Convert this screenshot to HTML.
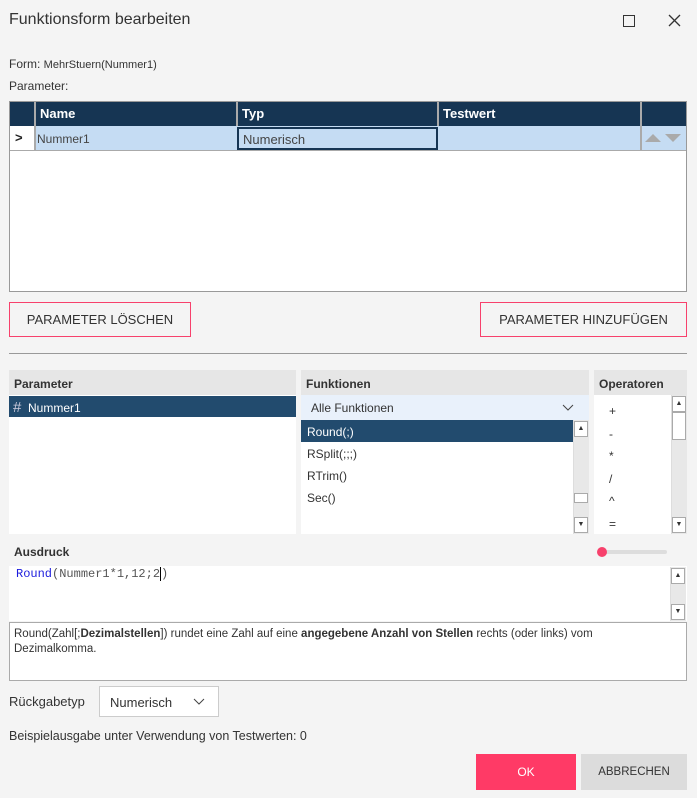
<!DOCTYPE html>
<html><head><meta charset="utf-8"><style>
*{box-sizing:border-box;margin:0;padding:0}
body{width:697px;height:798px;background:#f4f4f4;font-family:"Liberation Sans",sans-serif;color:#333;font-size:12px;position:relative;overflow:hidden}
.a{position:absolute}
.hd{background:#163553;color:#fff;font-weight:bold;font-size:13px}
.ph{background:#e6e6e6;font-weight:bold;font-size:12px;color:#333;padding:7px 5px}
.sb{background:#e8e8e8;border-left:1px solid #ddd}
.arr{position:absolute;width:14px;height:16px;background:#fff;border:1px solid #aaa;font-size:7px;text-align:center;line-height:14px;color:#333}
</style></head><body>
<div class="a" style="left:9px;top:11px;font-size:16px;color:#333">Funktionsform bearbeiten</div>
<div class="a" style="left:623px;top:15px;width:12px;height:12px;border:1.3px solid #333"></div>
<svg class="a" style="left:668px;top:14px" width="13" height="13"><path d="M1 1L12 12M12 1L1 12" stroke="#333" stroke-width="1.3"/></svg>
<div class="a" style="left:9px;top:57px;font-size:12px">Form: <span style="font-size:11px">MehrStuern(Nummer1)</span></div>
<div class="a" style="left:9px;top:79px;font-size:12px">Parameter:</div>

<div class="a" style="left:9px;top:101px;width:678px;height:191px;background:#fff;border:1px solid #999"></div>
<div class="a hd" style="left:10px;top:102px;width:676px;height:24px"></div>
<div class="a hd" style="left:40px;top:106px">Name</div>
<div class="a hd" style="left:242px;top:106px">Typ</div>
<div class="a hd" style="left:443px;top:106px">Testwert</div>
<div class="a" style="left:34px;top:102px;width:2px;height:49px;background:#aaa"></div>
<div class="a" style="left:236px;top:102px;width:2px;height:49px;background:#aaa"></div>
<div class="a" style="left:437px;top:102px;width:2px;height:49px;background:#aaa"></div>
<div class="a" style="left:640px;top:102px;width:2px;height:49px;background:#aaa"></div>
<div class="a" style="left:10px;top:126px;width:24px;height:25px;background:#fff;font-weight:bold;font-size:13px;padding:4px 0 0 5px;color:#222">&gt;</div>
<div class="a" style="left:36px;top:126px;width:604px;height:25px;background:#c5dcf3"></div>
<div class="a" style="left:642px;top:126px;width:44px;height:25px;background:#c5dcf3"></div>
<div class="a" style="left:10px;top:150px;width:676px;height:1px;background:#aaa"></div>
<div class="a" style="left:37px;top:132px;font-size:12px;color:#444">Nummer1</div>
<div class="a" style="left:237px;top:127px;width:201px;height:23px;border:2px solid #163553;font-size:13px;color:#444;padding:3px 4px">Numerisch</div>
<svg class="a" style="left:644px;top:132px" width="40" height="12"><path d="M1 10L9 2L17 10Z M21 2L37 2L29 10Z" fill="#aaa"/></svg>

<div class="a" style="left:9px;top:302px;width:182px;height:35px;border:1px solid #f7416c;font-size:13px;text-align:center;line-height:33px;color:#333">PARAMETER LÖSCHEN</div>
<div class="a" style="left:480px;top:302px;width:207px;height:35px;border:1px solid #f7416c;font-size:13px;text-align:center;line-height:33px;color:#333">PARAMETER HINZUFÜGEN</div>
<div class="a" style="left:9px;top:353px;width:678px;height:1px;background:#999"></div>

<div class="a" style="left:9px;top:370px;width:287px;height:164px;background:#fff"></div>
<div class="a ph" style="left:9px;top:370px;width:287px;height:25px">Parameter</div>
<div class="a" style="left:9px;top:396px;width:287px;height:21px;background:#224b6e;color:#fff;font-size:12px;padding:3px 0 0 4px"><span style="font-size:15px;color:#ccd">#</span>&nbsp; Nummer1</div>

<div class="a" style="left:301px;top:370px;width:288px;height:164px;background:#fff"></div>
<div class="a ph" style="left:301px;top:370px;width:288px;height:25px">Funktionen</div>
<div class="a" style="left:301px;top:395px;width:288px;height:25px;background:#e9f1fb;font-size:12px;padding:6px 10px">Alle Funktionen</div>
<svg class="a" style="left:562px;top:404px" width="12" height="8"><path d="M1 1L6 6L11 1" stroke="#444" fill="none"/></svg>
<div class="a" style="left:301px;top:420px;width:272px;height:22px;background:#224b6e;color:#fff;font-size:12px;padding:5px 6px">Round(;)</div>
<div class="a" style="left:307px;top:447px;font-size:12px">RSplit(;;;)</div>
<div class="a" style="left:307px;top:469px;font-size:12px">RTrim()</div>
<div class="a" style="left:307px;top:491px;font-size:12px">Sec()</div>
<div class="a sb" style="left:573px;top:420px;width:16px;height:114px"></div>
<div class="arr" style="left:574px;top:421px">▲</div>
<div class="a" style="left:574px;top:493px;width:14px;height:10px;background:#fff;border:1px solid #aaa"></div>
<div class="arr" style="left:574px;top:517px">▼</div>

<div class="a" style="left:594px;top:370px;width:93px;height:164px;background:#fff"></div>
<div class="a ph" style="left:594px;top:370px;width:93px;height:25px">Operatoren</div>
<div class="a" style="left:609px;top:400px;font-size:12px;line-height:22.5px">+<br>-<br>*<br>/<br>^<br>=</div>
<div class="a sb" style="left:671px;top:395px;width:16px;height:139px"></div>
<div class="arr" style="left:672px;top:396px">▲</div>
<div class="a" style="left:672px;top:412px;width:14px;height:28px;background:#fff;border:1px solid #aaa"></div>
<div class="arr" style="left:672px;top:517px">▼</div>

<div class="a" style="left:14px;top:545px;font-weight:bold;font-size:12px">Ausdruck</div>
<div class="a" style="left:598px;top:550px;width:69px;height:4px;background:#ddd;border-radius:2px"></div>
<div class="a" style="left:597px;top:547px;width:10px;height:10px;background:#f7416c;border-radius:50%"></div>
<div class="a" style="left:9px;top:566px;width:678px;height:55px;background:#fff"></div>
<div class="a" style="left:16px;top:567px;font-family:'Liberation Mono',monospace;font-size:12px;color:#555"><span style="color:#1c1cdd">Round</span>(Nummer1*1,12;2<span style="border-left:1px solid #000"></span>)</div>
<div class="a sb" style="left:670px;top:567px;width:16px;height:54px"></div>
<div class="arr" style="left:671px;top:568px">▲</div>
<div class="arr" style="left:671px;top:604px">▼</div>
<div class="a" style="left:9px;top:622px;width:678px;height:59px;background:#fff;border:1px solid #aaa;font-size:11.5px;padding:4px 4px;line-height:15px;color:#333"><div style="width:612px">Round(Zahl[;<b>Dezimalstellen</b>]) rundet eine Zahl auf eine <b>angegebene Anzahl von Stellen</b> rechts (oder links) vom Dezimalkomma.</div></div>

<div class="a" style="left:9px;top:694px;font-size:13px">Rückgabetyp</div>
<div class="a" style="left:99px;top:686px;width:120px;height:31px;background:#fff;border:1px solid #ccc;font-size:13px;padding:8px 10px">Numerisch</div>
<svg class="a" style="left:193px;top:698px" width="12" height="8"><path d="M1 1L6 6L11 1" stroke="#444" fill="none"/></svg>
<div class="a" style="left:9px;top:729px;font-size:12.5px">Beispielausgabe unter Verwendung von Testwerten: 0</div>
<div class="a" style="left:476px;top:754px;width:100px;height:36px;background:#ff3a66;color:#fff;font-size:12px;text-align:center;line-height:36px">OK</div>
<div class="a" style="left:581px;top:754px;width:106px;height:36px;background:#dcdcdc;color:#333;font-size:11.5px;text-align:center;line-height:36px">ABBRECHEN</div>
</body></html>
